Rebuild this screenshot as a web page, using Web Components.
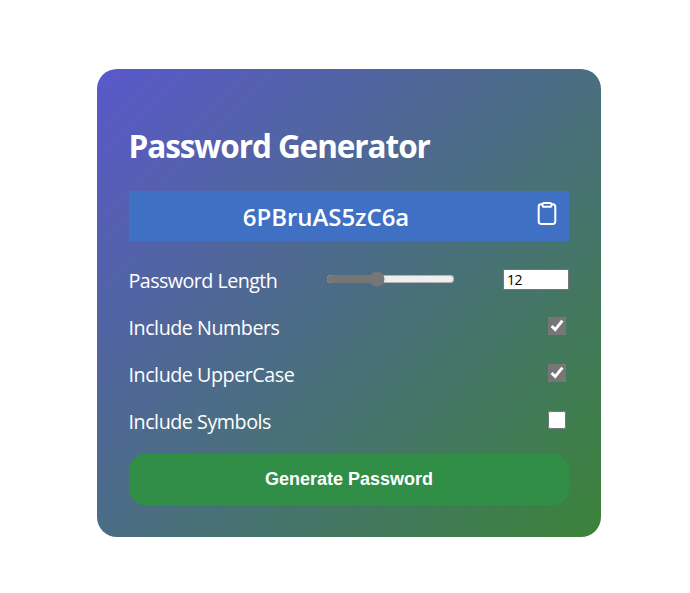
<!DOCTYPE html>
<html lang="en"><head><meta charset="utf-8"><title>Password Generator</title>
<style>
body{margin:0;padding:69px 89px 56px 97px;background:#fff;font-family:"Open Sans","Noto Sans",sans-serif}
</style></head><body>
<password-card>
<password-display slot="display" value="6PBruAS5zC6a"></password-display>
<length-row></length-row>
<option-row checked>Include Numbers</option-row>
<option-row checked>Include UpperCase</option-row>
<option-row>Include Symbols</option-row>
<generate-button slot="action">Generate Password</generate-button>
</password-card>
<script>
class Base extends HTMLElement{
  constructor(){super();this.attachShadow({mode:'open'}).innerHTML=this.template();}
}
customElements.define('password-card',class extends Base{
template(){return `<style>
:host{display:flex;flex-direction:column;box-sizing:border-box;width:504px;height:468px;padding:54px 32px 32px;border-radius:20px;color:#fff;background:linear-gradient(135deg,#5a58cb,#3b8339)}
h2{margin:0 0 20px;height:48px;font-size:31.5px;line-height:46px;font-weight:700;letter-spacing:-1.07px;text-indent:-.5px;white-space:nowrap}
.rows{display:flex;flex-direction:column;padding-top:17px;height:196px;box-sizing:border-box}
</style><h2>Password Generator</h2><slot name="display"></slot><div class="rows"><slot></slot></div><slot name="action"></slot>`}
});
customElements.define('password-display',class extends Base{
template(){return `<style>
:host{display:grid;grid-template-columns:1fr 46px;height:50px;background:#4070c4;flex:none}
span{text-align:center;font-size:24px;font-weight:600;line-height:51px;letter-spacing:-.05px}
svg{margin:10px 0 0 10.5px}
</style><span>${this.getAttribute('value')}</span>
<svg width="26" height="26" viewBox="0 0 26 26" fill="none" stroke="#fff" stroke-width="2" stroke-linejoin="round"><path d="M8.5 3.3H7a2.3 2.3 0 0 0-2.3 2.3v15A2.3 2.3 0 0 0 7 22.9h12a2.3 2.3 0 0 0 2.3-2.3v-15A2.3 2.3 0 0 0 19 3.3h-1.5"/><rect x="8.5" y="2" width="9" height="3.8" rx="1.6"/></svg>`}
});
customElements.define('length-row',class extends Base{
template(){return `<style>
:host{display:flex;flex:none;justify-content:space-between;height:47px;font-size:19.7px;line-height:45px}
label{width:195px;letter-spacing:-.55px;text-indent:-.5px}
input{box-sizing:border-box;margin:0;accent-color:#767676}
[type=range]{width:129px;height:16px;margin:13px 0 0 2px}
[type=text]{width:66px;height:21px;margin:11px 0 0 48px;border:1px solid #767676;padding:1px 3px;border-radius:0;font:14px "Open Sans",sans-serif;letter-spacing:-.5px;color:#000;background:#fff}
</style><label>Password Length</label><input type="range" min="0" max="100" step="any" value="38"><input type="text" value="12">`}
});
customElements.define('option-row',class extends Base{
template(){return `<style>
:host{display:flex;flex:none;justify-content:space-between;height:47px;font-size:19.7px;line-height:45px;letter-spacing:-.46px}
label{text-indent:-.5px}
input{width:18px;height:18px;margin:12px 3px 0 0;accent-color:#767676}
</style><label><slot></slot></label><input type="checkbox" ${this.hasAttribute('checked')?'checked':''}>`}
});
customElements.define('generate-button',class extends Base{
template(){return `<style>
:host{display:block;margin-top:17px}
button{display:block;width:440px;height:51px;border:0;padding:0;border-radius:16px;background:#318e47;color:#fff;font:bold 18px "Liberation Sans",Arial,sans-serif}
</style><button><slot></slot></button>`}
});
</script></body></html>
